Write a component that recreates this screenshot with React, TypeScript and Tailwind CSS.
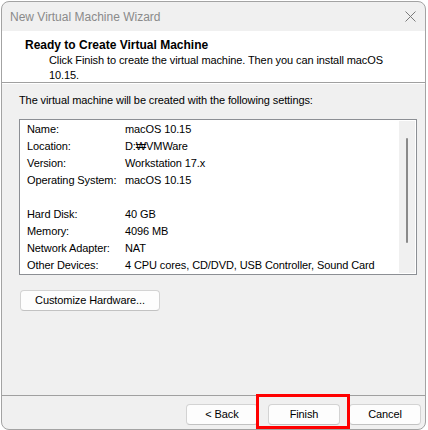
import React from 'react';

const settings: ([string, string] | null)[] = [
  ['Name:', 'macOS 10.15'],
  ['Location:', 'D:₩VMWare'],
  ['Version:', 'Workstation 17.x'],
  ['Operating System:', 'macOS 10.15'],
  null,
  ['Hard Disk:', '40 GB'],
  ['Memory:', '4096 MB'],
  ['Network Adapter:', 'NAT'],
  ['Other Devices:', '4 CPU cores, CD/DVD, USB Controller, Sound Card'],
];

const WinButton: React.FC<{ label: string; className?: string }> = ({ label, className = '' }) => (
  <button
    className={`h-[21px] rounded-[4px] border border-[#d3d3d3] border-b-[#c2c2c2] bg-[#fdfdfd] text-[11px] leading-none text-black ${className}`}
  >
    {label}
  </button>
);

const CloseIcon = () => (
  <svg width="11" height="11" viewBox="0 0 11 11" className="block">
    <path d="M0.5 0.5 L10.5 10.5 M10.5 0.5 L0.5 10.5" stroke="#7a7a7a" strokeWidth="1" fill="none" />
  </svg>
);

export default function App() {
  return (
    <div className="relative h-[430px] w-[428px] overflow-hidden bg-white font-['Liberation_Sans',Arial,sans-serif] text-[11px] tracking-[-0.1px] text-black">
      <div className="ml-[1px] mt-[1px] flex h-[429px] w-[425px] flex-col overflow-hidden rounded-[8px] border border-[#a3a3a3] bg-[#f0f0f0]">
        {/* title bar */}
        <div className="flex h-[29px] shrink-0 items-center justify-between pl-[8px] pr-[9px]">
          <span className="text-[12px] tracking-normal text-[#8a8a8a]">New Virtual Machine Wizard</span>
          <CloseIcon />
        </div>

        {/* header */}
        <div className="h-[51px] shrink-0 bg-white pl-[23px] pt-[7px]">
          <div className="text-[12px] font-bold leading-[15px] tracking-normal">Ready to Create Virtual Machine</div>
          <div className="pl-[24px] leading-[15px]">
            Click Finish to create the virtual machine. Then you can install macOS
            <br />
            10.15.
          </div>
        </div>
        <div className="h-[1px] shrink-0 bg-[#a0a0a0]" />
        <div className="h-[1px] shrink-0 bg-white" />

        {/* content */}
        <div className="flex-1 pl-[17px] pr-[8px] pt-[9px]">
          <div className="leading-[15px]">The virtual machine will be created with the following settings:</div>
          <div className="mt-[11px] flex h-[156px] border border-[#8c8f94] bg-white">
            <div className="flex-1 pl-[7px] pt-[1px]">
              {settings.map((row, i) =>
                row ? (
                  <div key={i} className="flex h-[17px] items-center whitespace-nowrap">
                    <span className="w-[98px]">{row[0]}</span>
                    <span>{row[1]}</span>
                  </div>
                ) : (
                  <div key={i} className="h-[17px]" />
                )
              )}
            </div>
            <div className="mb-[1px] mr-[1px] mt-[1px] flex w-[16px] justify-center bg-[#f0f0f0]">
              <div className="mt-[17px] h-[105px] w-[2px] rounded-full bg-[#8a8a8a]" />
            </div>
          </div>
          <WinButton label="Customize Hardware..." className="ml-[1px] mt-[15px] w-[140px]" />
        </div>

        {/* footer */}
        <div className="h-[1px] shrink-0 bg-[#a0a0a0]" />
        <div className="flex h-[33px] shrink-0 items-start justify-end gap-[9px] pr-[4px] pt-[8px]">
          <WinButton label="< Back" className="w-[72px]" />
          <WinButton label="Finish" className="ml-[1px] w-[72px]" />
          <WinButton label="Cancel" className="w-[72px]" />
        </div>
      </div>

      {/* highlight box */}
      <div className="absolute left-[256px] top-[394px] h-[35px] w-[94px] border-[3px] border-[#ff0000]" />
    </div>
  );
}
